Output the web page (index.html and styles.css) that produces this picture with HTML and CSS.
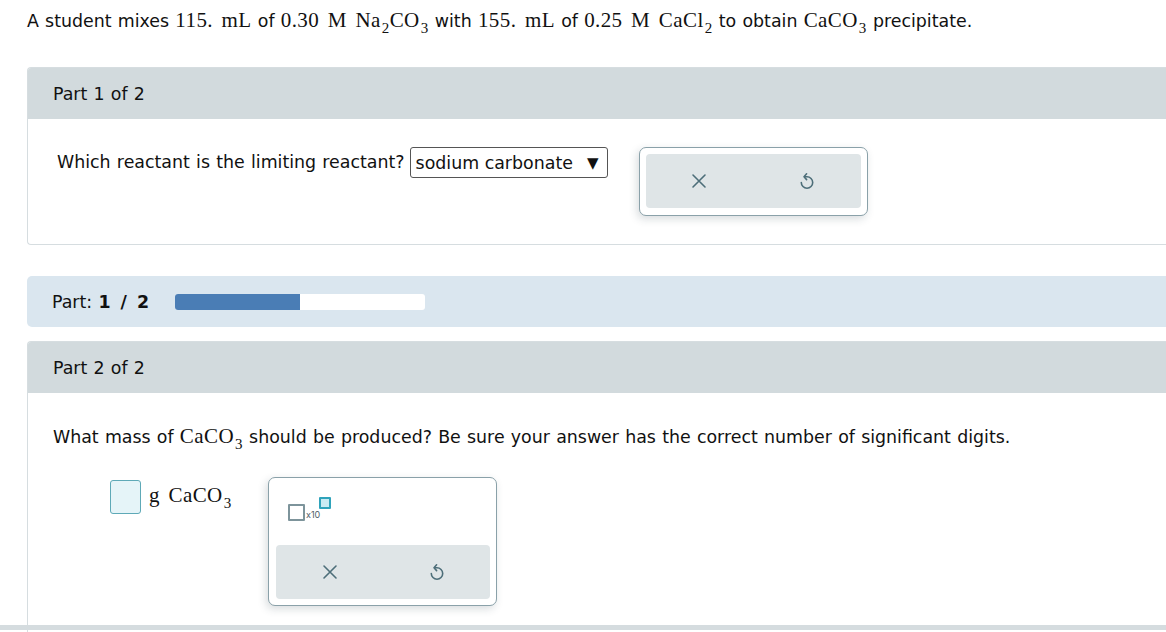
FILE: index.html
```html
<!DOCTYPE html>
<html>
<head>
<meta charset="utf-8">
<link rel="stylesheet" href="styles.css">
</head>
<body>
<div class="page">
  <p class="intro">A student mixes <span class="m">115. mL</span> of <span class="m">0.30 M Na<sub>2</sub>CO<sub>3</sub></span> with <span class="m">155. mL</span> of <span class="m">0.25 M CaCl<sub>2</sub></span> to obtain <span class="m">CaCO<sub>3</sub></span> precipitate.</p>

  <section class="card">
    <div class="card-head">Part 1 of 2</div>
    <div class="card-body body1">
      <div class="row">
        <span class="q">Which reactant is the limiting reactant?</span>
        <div class="select"><span>sodium carbonate</span><span class="tri">▼</span></div>
        <div class="tools tools1">
          <div class="btns">
            <button class="btn"><svg width="16" height="16" viewBox="0 0 16 16"><path d="M2 2L14 14M14 2L2 14" stroke="#4d6e79" stroke-width="1.6" fill="none" stroke-linecap="round"/></svg></button>
            <button class="btn"><svg width="16" height="18" viewBox="0 0 16 18"><path d="M2.3 10.5A5.7 5.7 0 1 0 8 4.8L6 4.8" stroke="#4d6e79" stroke-width="1.6" fill="none" stroke-linecap="round"/><path d="M7.6 1.8L5 4.8L7.6 7.6" stroke="#4d6e79" stroke-width="1.6" fill="none" stroke-linecap="round" stroke-linejoin="round"/></svg></button>
          </div>
        </div>
      </div>
    </div>
  </section>

  <div class="progress">
    <span class="plabel">Part: <b>1 / 2</b></span>
    <div class="bar"><div class="fill" style="width:50%"></div></div>
  </div>

  <section class="card card2">
    <div class="card-head">Part 2 of 2</div>
    <div class="card-body body2">
      <p class="q2">What mass of <span class="m">CaCO<sub>3</sub></span> should be produced? Be sure your answer has the correct number of significant digits.</p>
      <div class="answer">
        <div class="ans-in"><div class="inbox"></div><span class="m unit">g CaCO<sub>3</sub></span></div>
        <div class="tools tools2">
          <div class="sci">
            <span class="sq"></span><span class="x10">x10</span><span class="sup"></span>
          </div>
          <div class="btns">
            <button class="btn"><svg width="16" height="16" viewBox="0 0 16 16"><path d="M2 2L14 14M14 2L2 14" stroke="#4d6e79" stroke-width="1.6" fill="none" stroke-linecap="round"/></svg></button>
            <button class="btn"><svg width="16" height="18" viewBox="0 0 16 18"><path d="M2.3 10.5A5.7 5.7 0 1 0 8 4.8L6 4.8" stroke="#4d6e79" stroke-width="1.6" fill="none" stroke-linecap="round"/><path d="M7.6 1.8L5 4.8L7.6 7.6" stroke="#4d6e79" stroke-width="1.6" fill="none" stroke-linecap="round" stroke-linejoin="round"/></svg></button>
          </div>
        </div>
      </div>
    </div>
  </section>
</div>
<div class="footer-line"></div>
</body>
</html>
```

FILE: styles.css
```css
html, body {
  margin: 0;
  padding: 0;
  background: #fff;
  overflow: hidden;
  height: 632px;
}
body {
  font-family: "DejaVu Sans", Verdana, sans-serif;
  font-size: 17.4px;
  word-spacing: 0.7px;
  color: #111;
  position: relative;
}
.page {
  padding-left: 27px;
  width: 1160px;
}
.m {
  font-family: "Liberation Serif", "Times New Roman", serif;
  font-size: 21px;
  letter-spacing: 0.4px;
  word-spacing: 3px;
}
.m sub {
  font-size: 15px;
  vertical-align: -6px;
  line-height: 0;
  margin-left: 1px;
}
.intro {
  margin: 0;
  padding-top: 8px;
  height: 59px;
  line-height: 24px;
  white-space: nowrap;
}
.card {
  border: 1px solid #d6dde0;
  border-right: none;
  border-radius: 4px 0 0 4px;
  background: #fff;
}
.card-head {
  background: #d2dadd;
  height: 51px;
  display: flex;
  align-items: center;
  padding-left: 25px;
  border-radius: 3px 0 0 0;
}
.body1 {
  height: 125px;
  padding: 28px 0 0 29px;
  box-sizing: border-box;
}
.row {
  display: flex;
  align-items: flex-start;
}
.q {
  line-height: 31px;
  margin-right: 5px;
  white-space: nowrap;
}
.select {
  width: 198px;
  height: 31px;
  box-sizing: border-box;
  border: 1px solid #555;
  border-radius: 3px;
  display: flex;
  align-items: center;
  justify-content: space-between;
  padding: 0 8px 0 5px;
  margin-right: 31px;
  flex: none;
  word-spacing: 0;
}
.tri { font-size: 15px; }
.tools {
  width: 229px;
  flex: none;
  box-sizing: border-box;
  border: 1px solid #8aa1a9;
  border-radius: 7px;
  background: #fff;
  padding: 6px;
  box-shadow: -2px 3px 8px rgba(40, 60, 70, 0.18);
}
.tools1 { height: 69px; }
.btns {
  display: flex;
  height: 54px;
  background: #dfe5e7;
  border-radius: 4px;
}
.btn {
  flex: 1;
  border: none;
  background: transparent;
  display: flex;
  align-items: center;
  justify-content: center;
  padding: 0;
}
.progress {
  margin-top: 31px;
  height: 51px;
  background: #dae6ef;
  border-radius: 5px 0 0 5px;
  display: flex;
  align-items: center;
  padding-left: 25px;
}
.plabel { width: 123px; white-space: nowrap; }
.plabel b { font-weight: bold; word-spacing: 4px; }
.bar {
  width: 250px;
  height: 16px;
  background: #fff;
  border-radius: 3px;
  overflow: hidden;
}
.fill {
  height: 100%;
  background: #4a7db5;
}
.card2 {
  margin-top: 14px;
  height: 300px;
  border-bottom: none;
  border-radius: 4px 0 0 0;
}
.body2 {
  padding: 29px 0 0 25px;
}
.q2 {
  margin: 0;
  line-height: 28px;
  white-space: nowrap;
}
.answer {
  display: flex;
  align-items: flex-start;
  margin-top: 26px;
  padding-left: 57px;
}
.ans-in {
  display: flex;
  align-items: flex-start;
  margin-top: 3px;
  width: 158px;
}
.inbox {
  width: 31px;
  height: 34px;
  box-sizing: border-box;
  border: 1px solid #5ea9b7;
  background: #e5f4f8;
  border-radius: 3px;
  margin-right: 8px;
}
.unit { line-height: 30px; }
.tools2 {
  height: 129px;
  padding: 8px 6px 6px 7px;
}
.sci {
  height: 59px;
  position: relative;
}
.sq {
  position: absolute;
  left: 12px;
  top: 18px;
  width: 17px;
  height: 17px;
  box-sizing: border-box;
  border: 2px solid #7d949b;
  border-radius: 1px;
}
.x10 {
  position: absolute;
  left: 30px;
  top: 23px;
  font-family: Inter, "DejaVu Sans", sans-serif;
  font-size: 9px;
  color: #4f6169;
}
.sup {
  position: absolute;
  left: 43px;
  top: 11px;
  width: 12px;
  height: 12px;
  box-sizing: border-box;
  border: 2px solid #2fa3bb;
  background: #c9ebf3;
  border-radius: 1px;
}
.footer-line {
  position: absolute;
  left: 0;
  top: 625px;
  width: 100%;
  height: 5px;
  background: #d5dcdf;
}
```
